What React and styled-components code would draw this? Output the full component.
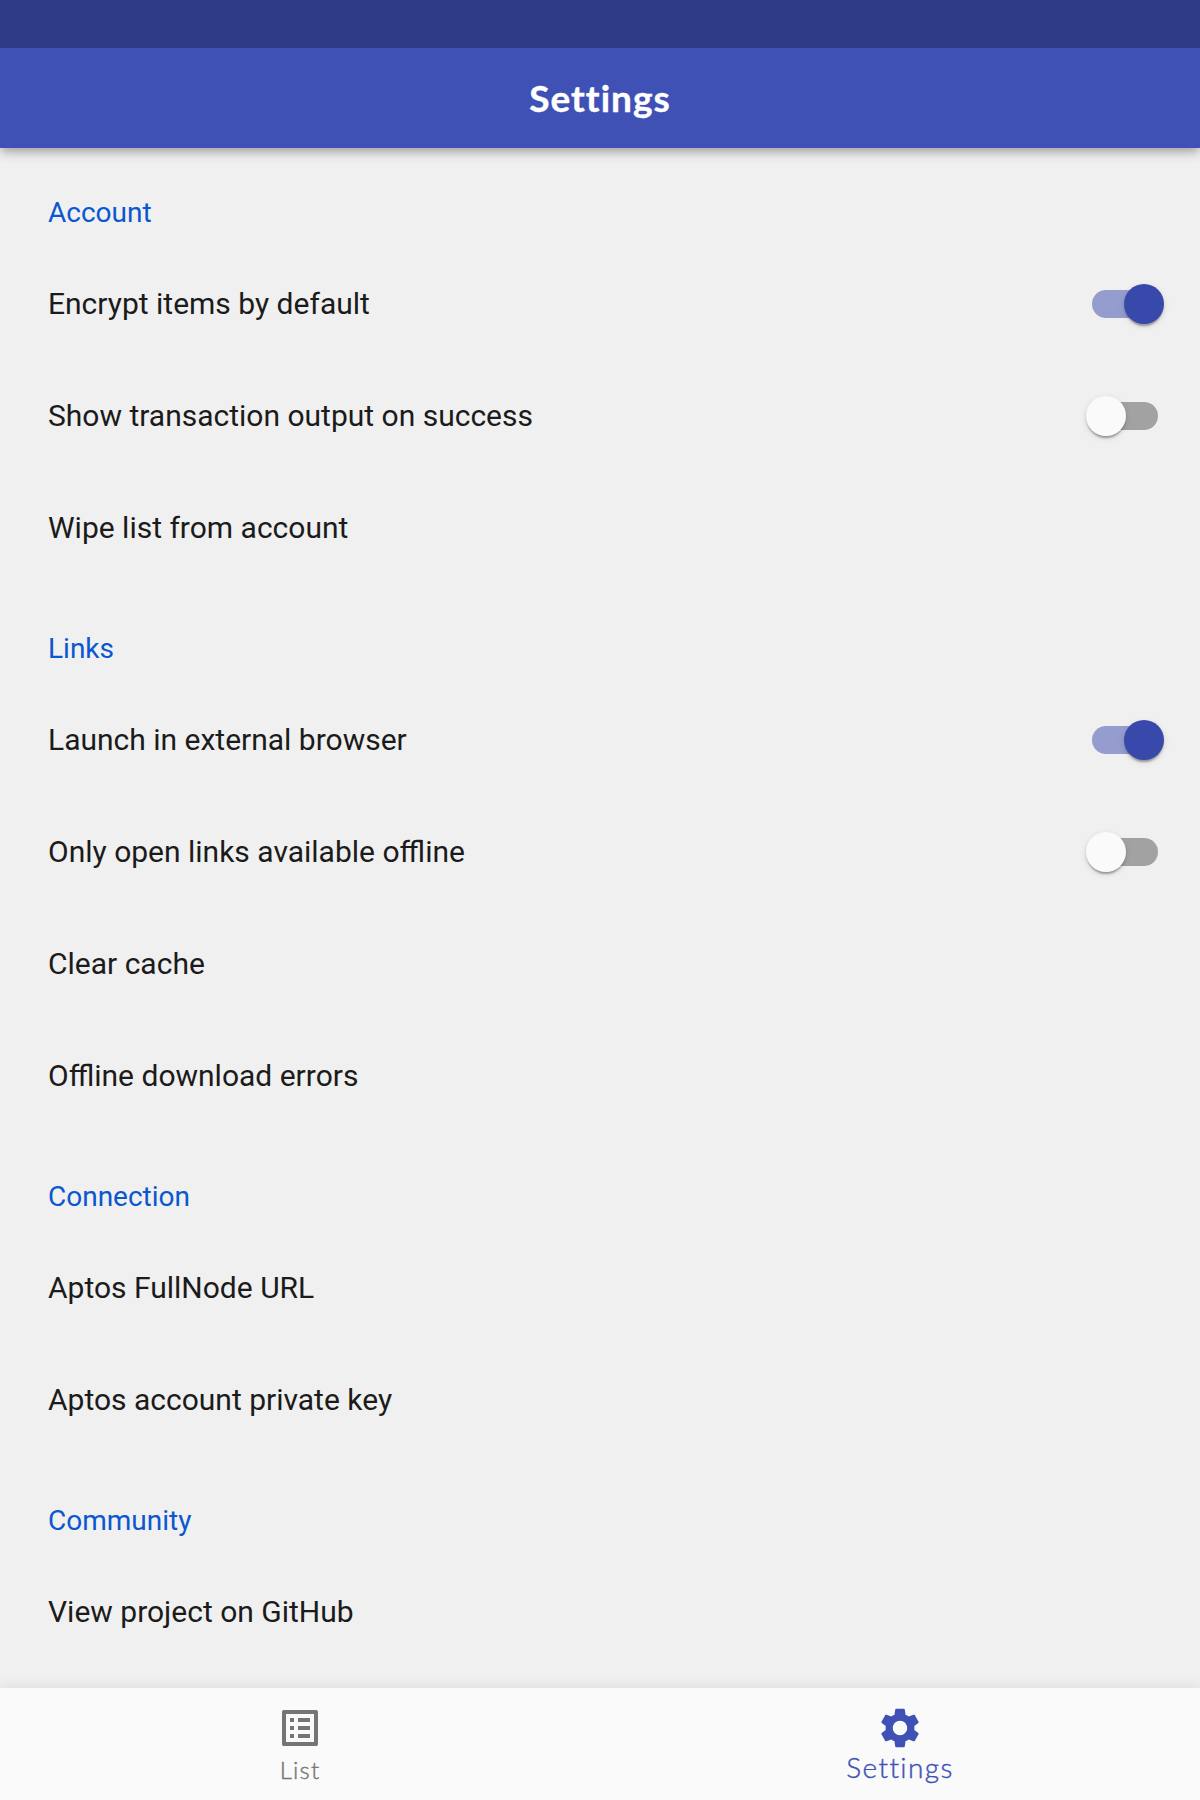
import React, { useState } from "react";
import styled, { createGlobalStyle } from "styled-components";
import { MdListAlt, MdSettings } from "react-icons/md";

const GlobalStyle = createGlobalStyle`
  *, *::before, *::after { box-sizing: border-box; }
  body {
    margin: 0;
    background: #f0f0f0;
    font-family: Roboto, "Liberation Sans", sans-serif;
  }
`;

const Screen = styled.div`
  display: flex;
  flex-direction: column;
  height: 1800px;
  overflow: hidden;
  background: #f0f0f0;
`;

const StatusBar = styled.div`
  flex: none;
  height: 48px;
  background: #2e3b87;
  z-index: 2;
`;

const AppBar = styled.header`
  flex: none;
  display: flex;
  align-items: center;
  justify-content: center;
  height: 100px;
  background: #3f51b5;
  z-index: 1;
  box-shadow: 0 4px 8px -2px rgba(0, 0, 0, 0.2), 0 6px 10px rgba(0, 0, 0, 0.12),
    0 2px 16px rgba(0, 0, 0, 0.08);
`;

const Title = styled.h1`
  margin: 0;
  font-family: Lato, sans-serif;
  font-size: 37px;
  font-weight: 700;
  line-height: 44px;
  letter-spacing: 1px;
  color: #fff;
  -webkit-text-stroke: 0.4px #fff;
`;

const Content = styled.main`
  flex: 1;
  min-height: 0;
  overflow: hidden;
  padding-top: 28px;
`;

const Section = styled.section`
  padding-bottom: 28px;
`;

const SectionTitle = styled.h2`
  display: flex;
  align-items: center;
  height: 72px;
  margin: 0;
  padding: 0 48px;
  font-size: 28px;
  font-weight: 400;
  color: #0b57d0;
`;

const Row = styled.div`
  display: flex;
  align-items: center;
  justify-content: space-between;
  height: 112px;
  padding: 0 36px 0 48px;
`;

const RowLabel = styled.span`
  font-size: 30px;
  line-height: 36px;
  color: #1b1b1b;
`;

const Track = styled.button`
  display: flex;
  align-items: center;
  justify-content: ${(p) => (p.$on ? "flex-end" : "flex-start")};
  width: 66px;
  height: 28px;
  margin: 0 6px 0 0;
  padding: 0;
  border: 0;
  border-radius: 14px;
  background: ${(p) => (p.$on ? "#959dcf" : "#a2a2a2")};
`;

const Thumb = styled.span`
  flex: none;
  width: 40px;
  height: 40px;
  margin: 0 -6px;
  border-radius: 50%;
  background: ${(p) => (p.$on ? "#3949ab" : "#fafafa")};
  box-shadow: 0 4px 2px -2px rgba(0, 0, 0, 0.2), 0 2px 2px rgba(0, 0, 0, 0.14),
    0 2px 6px rgba(0, 0, 0, 0.12);
`;

const BottomNav = styled.nav`
  flex: none;
  display: grid;
  grid-template-columns: 1fr 1fr;
  height: 112px;
  background: #fafafa;
  z-index: 1;
  box-shadow: 0 -1px 12px rgba(0, 0, 0, 0.09);
`;

const NavItem = styled.a`
  display: flex;
  flex-direction: column;
  align-items: center;
  padding-top: 16px;
  color: ${(p) => (p.$active ? "#3f51b5" : "#757575")};

  svg {
    flex: none;
    width: 48px;
    height: 48px;
  }
`;

const NavLabel = styled.span`
  margin-top: ${(p) => (p.$active ? "-2px" : "1px")};
  font-family: Lato, sans-serif;
  font-weight: 300;
  font-size: ${(p) => (p.$active ? 28 : 24)}px;
  line-height: 34px;
  letter-spacing: ${(p) => (p.$active ? "1.4px" : "1.2px")};
  -webkit-text-stroke: 0.4px currentColor;
`;

const sections = [
  {
    title: "Account",
    rows: [
      { label: "Encrypt items by default", value: true },
      { label: "Show transaction output on success", value: false },
      { label: "Wipe list from account" },
    ],
  },
  {
    title: "Links",
    rows: [
      { label: "Launch in external browser", value: true },
      { label: "Only open links available offline", value: false },
      { label: "Clear cache" },
      { label: "Offline download errors" },
    ],
  },
  {
    title: "Connection",
    rows: [{ label: "Aptos FullNode URL" }, { label: "Aptos account private key" }],
  },
  { title: "Community", rows: [{ label: "View project on GitHub" }] },
];

function Toggle({ initial, label }) {
  const [on, setOn] = useState(initial);
  return (
    <Track role="switch" aria-checked={on} aria-label={label} $on={on} onClick={() => setOn(!on)}>
      <Thumb $on={on} />
    </Track>
  );
}

export default function App() {
  return (
    <>
      <GlobalStyle />
      <Screen>
        <StatusBar />
        <AppBar>
          <Title>Settings</Title>
        </AppBar>
        <Content>
          {sections.map((section) => (
            <Section key={section.title}>
              <SectionTitle>{section.title}</SectionTitle>
              {section.rows.map((row) => (
                <Row key={row.label}>
                  <RowLabel>{row.label}</RowLabel>
                  {row.value !== undefined && <Toggle initial={row.value} label={row.label} />}
                </Row>
              ))}
            </Section>
          ))}
        </Content>
        <BottomNav>
          <NavItem>
            <MdListAlt />
            <NavLabel>List</NavLabel>
          </NavItem>
          <NavItem $active>
            <MdSettings />
            <NavLabel $active>Settings</NavLabel>
          </NavItem>
        </BottomNav>
      </Screen>
    </>
  );
}
